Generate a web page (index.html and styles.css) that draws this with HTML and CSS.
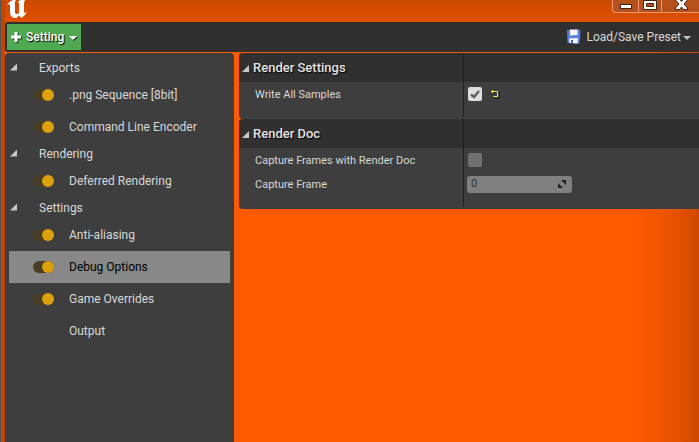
FILE: index.html
```html
<!DOCTYPE html>
<html lang="en">
<head>
<meta charset="utf-8">
<title>Movie Render Queue Settings</title>
<link rel="stylesheet" href="styles.css">
</head>
<body>
<div class="window">
  <header class="titlebar">
    <svg class="logo" viewBox="0 0 22 22" aria-hidden="true"><path d="M0 5.500 Q2 1 9 -1 L9.500 -.5 Q8 .5 8 3 V12.500 Q8.500 14.500 10.500 14 L12 13 V3.500 Q12 2 10.500 1.500 Q14 .5 16.500 -2 L19 -1 Q17 1 17 3.500 V12 Q17.500 14 20 11.500 Q18.500 15.500 14.500 18 L12 15.500 L9.500 18 Q3 18 3 12.500 V5 Q2.500 3.500 0 5.500 Z"/></svg>
    <div class="caption">
      <button class="cap" aria-label="Minimize"><svg viewBox="0 0 16 12"><rect x="2.500" y="4.500" width="11" height="4"/></svg></button>
      <button class="cap" aria-label="Maximize"><svg viewBox="0 0 16 12"><path fill-rule="evenodd" d="M1.500 .5h13v9h-13z M4.500 3.500h7v3h-7z"/></svg></button>
      <button class="cap close" aria-label="Close"><svg viewBox="0 0 16 12"><path d="M2.500-1h4L8.500 1.500 10.500-1h4v1L11 4l3.500 4v1.500h-4L8.500 7 6.500 9.500h-4V8L6 4 2.500 0z"/></svg></button>
    </div>
  </header>

  <div class="toolbar">
    <button class="add"><svg class="plus" viewBox="0 0 10 10"><path d="M3.500 0h3v3.500H10v3H6.500V10h-3V6.500H0v-3h3.500z"/></svg><span>Setting</span><svg class="arrow" viewBox="0 0 8 4"><path d="M0 0h8L4 4z"/></svg></button>
    <button class="preset"><svg class="disk" viewBox="0 0 16 16"><path fill="#1c2f66" d="M2 1l12 .5 1 1-1 13-11-1z"/><path fill="#5b7fe0" d="M1 1l12-.5 1.500 1.500-1 12.500L1.500 14z"/><path fill="#f4f6fa" d="M4 .5l7.500 0V6L4 6.500zM3 9.500l9-.5-.5 5.500-8-.5z"/><path fill="#4763a8" d="M5 11h2v3H5z"/></svg><span>Load/Save Preset</span><svg class="arrow" viewBox="0 0 8 4"><path d="M0 0h8L4 4z"/></svg></button>
  </div>

  <main class="body">
    <nav class="tree" aria-label="Settings list">
      <button class="group"><i class="tri"></i>Exports</button>
      <div class="item"><input class="switch" type="checkbox" id="s1" checked><label for="s1">.png Sequence [8bit]</label></div>
      <div class="item"><input class="switch" type="checkbox" id="s2" checked><label for="s2">Command Line Encoder</label></div>
      <button class="group"><i class="tri"></i>Rendering</button>
      <div class="item"><input class="switch" type="checkbox" id="s3" checked><label for="s3">Deferred Rendering</label></div>
      <button class="group"><i class="tri"></i>Settings</button>
      <div class="item"><input class="switch" type="checkbox" id="s4" checked><label for="s4">Anti-aliasing</label></div>
      <div class="item selected"><input class="switch" type="checkbox" id="s5" checked><label for="s5">Debug Options</label></div>
      <div class="item"><input class="switch" type="checkbox" id="s6" checked><label for="s6">Game Overrides</label></div>
      <div class="item fixed"><span>Output</span></div>
    </nav>

    <div class="details">
      <section class="category">
        <h2 class="head"><button><i class="tri"></i>Render Settings</button></h2>
        <div class="row">
          <label for="samples">Write All Samples</label>
          <div class="value"><input class="check" type="checkbox" id="samples" checked><button class="reset" aria-label="Reset to default"><svg viewBox="0 0 9 9"><path class="shade" d="M1 2.500h7.500v6h-5M3 1v3"/><path d="M0 1.500h6.500v5h-4M1.500 0v3"/></svg></button></div>
        </div>
      </section>
      <section class="category">
        <h2 class="head"><button><i class="tri"></i>Render Doc</button></h2>
        <div class="row">
          <label for="capture">Capture Frames with Render Doc</label>
          <div class="value"><input class="check" type="checkbox" id="capture"></div>
        </div>
        <div class="row">
          <label for="frame">Capture Frame</label>
          <div class="value"><div class="spin"><input type="text" id="frame" value="0"><svg viewBox="0 0 8 8" aria-hidden="true"><path d="M3 0h5v5zM0 3l5 5H0z"/></svg></div></div>
        </div>
      </section>
    </div>
  </main>
</div>
</body>
</html>
```
FILE: styles.css
```css
* { box-sizing: border-box; }

body {
  margin: 0;
  font: 12px/16px Roboto, "Liberation Sans", sans-serif;
  color: #d8d8d8;
}

button {
  margin: 0;
  padding: 0;
  border: 0;
  background: none;
  color: inherit;
  font: inherit;
}

input { margin: 0; }
svg { display: block; }

.window {
  display: flex;
  flex-direction: column;
  min-height: 100vh;
  padding-left: 4px;
  border-left: 1px solid #515558;
  background:
    linear-gradient(90deg, #c44500 4px, transparent 4px),
    linear-gradient(180deg, #cc4800 0, #e05000 22px, transparent 22px),
    linear-gradient(270deg, #cc4800 0, #e85200 25px, #ff5a00 65px);
}

.titlebar {
  display: flex;
  justify-content: space-between;
  height: 22px;
}

.logo {
  width: 22px;
  height: 22px;
  margin-left: 2px;
  fill: #fff;
}

.caption {
  display: flex;
  height: 13px;
}

.cap {
  display: flex;
  justify-content: center;
  width: 25px;
  border: solid #f09872;
  border-width: 0 1px 1px 0;
  background: #b6511c;
}

.cap:first-child {
  width: 27px;
  border-left-width: 1px;
  border-bottom-left-radius: 4px;
}

.cap:nth-child(2) { width: 23px; }

.cap.close {
  width: 37px;
  border-right: 0;
}

.cap svg {
  width: 16px;
  height: 12px;
  fill: #fff;
  stroke: #3c2418;
  overflow: visible;
}

.toolbar {
  display: flex;
  align-items: center;
  justify-content: space-between;
  height: 30px;
  padding: 0 8px 0 2px;
  margin-bottom: 1px;
  border-radius: 3px 0 0 3px;
  background: #303030;
}

.add {
  display: flex;
  align-items: center;
  gap: 5px;
  height: 26px;
  padding: 0 4px;
  background: #50a850;
  color: #fff;
  font-weight: 500;
  text-shadow: 1px 1px 1px #000;
}

.add svg {
  fill: #fff;
  filter: drop-shadow(1px 1px 0 #1c3c1c);
}

.plus {
  width: 10px;
  height: 10px;
}

.arrow {
  width: 8px;
  height: 4px;
  margin-top: 2px;
  fill: #c0c0c0;
}

.preset {
  display: flex;
  align-items: center;
  gap: 2px;
}

.disk {
  width: 16px;
  height: 16px;
  margin-right: 2px;
}

.body {
  display: flex;
  flex: 1;
  gap: 5px;
}

.tree {
  flex: 0 0 229px;
  padding: 4px;
  border-radius: 4px 4px 0 0;
  background: #3e3e3e;
}

.tri {
  flex: none;
  width: 7px;
  height: 7px;
  background: #c8c8c8;
  clip-path: polygon(100% 0, 100% 100%, 0 100%);
}

.group {
  display: flex;
  align-items: center;
  gap: 22px;
  width: 100%;
  height: 22px;
  padding-left: 1px;
}

.group .tri { margin-bottom: 2px; }

.item {
  display: flex;
  align-items: center;
  gap: 15px;
  height: 32px;
  padding-left: 24px;
}

.item.selected {
  background: #888;
  color: #000;
}

.item.fixed { padding-left: 60px; }

.switch {
  appearance: none;
  display: flex;
  justify-content: flex-end;
  width: 21px;
  height: 12px;
  border-radius: 6px;
  background: #4a3e26;
}

.switch::before {
  content: "";
  width: 12px;
  height: 12px;
  border-radius: 50%;
  background: #dca00c;
}

.details {
  flex: 1;
  min-width: 0;
}

.category {
  padding-bottom: 13px;
  border-radius: 4px 0 0 4px;
  background:
    linear-gradient(#202020, #202020) 224px 0 / 1px calc(100% - 2px) no-repeat,
    #3e3e3e;
}

.head {
  margin: 0;
  font-size: 13px;
  font-weight: 500;
  border-radius: 4px 0 0 0;
  background:
    linear-gradient(#202020, #202020) 224px 0 / 1px 100% no-repeat,
    #303030;
}

.head button {
  display: flex;
  align-items: center;
  gap: 4px;
  width: 100%;
  height: 29px;
  padding-left: 3px;
  color: #e4e4e4;
  text-shadow: 1px 1px 1px #000;
}

.head .tri { margin-top: 2px; }

.row {
  display: grid;
  grid-template-columns: 212px 1fr;
  align-items: center;
  height: 24px;
  padding-left: 16px;
  font-size: 11px;
}

.row label { padding-top: 2px; }

.value {
  display: flex;
  align-items: center;
  gap: 9px;
}

.check {
  appearance: none;
  width: 14px;
  height: 14px;
  margin-left: 1px;
  border-radius: 2px;
  background: #707070;
}

.check:checked {
  background: #dedede url("data:image/svg+xml,%3Csvg xmlns='http://www.w3.org/2000/svg' viewBox='0 0 14 14'%3E%3Cpath d='M3 7.500l3 2.500 5-6' fill='none' stroke='%23606060' stroke-width='2.500'/%3E%3C/svg%3E");
}

.reset svg {
  width: 9px;
  height: 9px;
  fill: none;
  stroke: #f2f23c;
}

.reset .shade { stroke: #222; }

.spin {
  display: flex;
  align-items: center;
  width: 105px;
  height: 17px;
  padding: 0 6px 0 4px;
  border-radius: 3px;
  background: #808080;
}

.spin input {
  flex: 1;
  min-width: 0;
  padding: 0;
  border: 0;
  background: none;
  color: #303030;
  font: inherit;
}

.spin svg {
  width: 8px;
  height: 8px;
  fill: #202020;
}
```
